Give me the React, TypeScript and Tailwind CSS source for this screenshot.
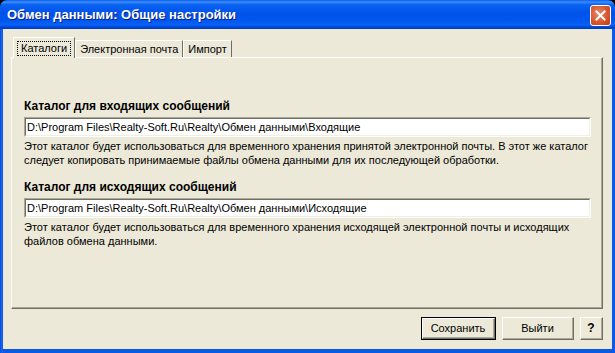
import React from 'react';

const font = { fontFamily: '"Liberation Sans", Arial, sans-serif' };

const Tab: React.FC<{ label: string; active?: boolean }> = ({ label, active }) => {
  if (active) {
    return (
      <div className="relative z-10 -mb-px flex h-[21px] items-center border-l border-t border-white border-r border-r-[#716f64] bg-[#ece9d8] px-[3px]">
        <span className="border border-dotted border-black px-[3px] leading-[13px]">{label}</span>
      </div>
    );
  }
  return (
    <div className="mt-[3px] flex h-[17px] items-center border-l border-t border-white border-r border-r-[#716f64] bg-[#ece9d8] px-[4px]">
      <span className="leading-[13px]">{label}</span>
    </div>
  );
};

const PathInput: React.FC<{ value: string }> = ({ value }) => (
  <div className="h-[20px] border border-t-[#aca899] border-l-[#aca899] border-b-white border-r-white">
    <div className="flex h-full items-center border border-t-[#716f64] border-l-[#716f64] border-b-[#f1efe2] border-r-[#f1efe2] bg-white px-[1px] leading-none whitespace-nowrap">
      {value}
    </div>
  </div>
);

const Button: React.FC<{ label: string; width: string; isDefault?: boolean; bold?: boolean }> = ({ label, width, isDefault, bold }) => (
  <div className={`${width} h-[23px] ${isDefault ? 'border border-black' : ''}`}>
    <div className="h-full border border-t-white border-l-white border-b-[#716f64] border-r-[#716f64]">
      <div className={`flex h-full items-center justify-center border-b border-r border-b-[#aca899] border-r-[#aca899] bg-[#ece9d8] ${bold ? 'font-bold text-[12px]' : ''}`}>
        {label}
      </div>
    </div>
  </div>
);

export default function App() {
  return (
    <div className="h-[353px] w-[615px] bg-black text-[11px] text-black" style={font}>
      <div className="flex h-full w-full flex-col overflow-hidden rounded-t-[7px]">
        {/* Title bar */}
        <div className="flex h-[29px] shrink-0 items-center justify-between bg-[linear-gradient(180deg,#0a5ef5_0%,#3d8df8_7%,#0a62f2_16%,#0053ea_45%,#0056ee_70%,#0a62f6_86%,#0047d8_93%,#003bc0_100%)] pl-[7px] pr-[4px]">
          <span className="text-[13px] font-bold text-white [text-shadow:1px_1px_0_#0a1e80]">
            Обмен данными: Общие настройки
          </span>
          <div className="mt-[1px] flex h-[21px] w-[21px] items-center justify-center rounded-[3px] border border-white bg-[radial-gradient(circle_at_40%_40%,#e98a6c_0%,#d9572f_55%,#c03a16_100%)]">
            <svg width="11" height="11" viewBox="0 0 11 11">
              <path d="M1.5 1.5 L9.5 9.5 M9.5 1.5 L1.5 9.5" stroke="white" strokeWidth="2" strokeLinecap="square" />
            </svg>
          </div>
        </div>

        {/* Window frame */}
        <div className="flex flex-1 flex-col bg-[linear-gradient(90deg,#0831d9_0px,#166aee_1px,#0a5ae6_3px)] px-[3px] pb-[4px]">
          <div className="flex flex-1 flex-col bg-[#ece9d8] pl-[8px] pr-[9px] pt-[8px] pb-[9px]">
            {/* Tabs */}
            <div className="flex items-end pl-[2px]">
              <Tab label="Каталоги" active />
              <Tab label="Электронная почта" />
              <Tab label="Импорт" />
            </div>

            {/* Panel */}
            <div className="h-[252px] border border-t-white border-l-white border-b-[#716f64] border-r-[#716f64]">
              <div className="h-full border-b border-r border-b-[#aca899] border-r-[#aca899] pl-[12px] pr-[10px] pt-[41px]">
                <div className="h-[14px] text-[12px] font-bold leading-[14px]">Каталог для входящих сообщений</div>
                <div className="mt-[4px]">
                  <PathInput value="D:\Program Files\Realty-Soft.Ru\Realty\Обмен данными\Входящие" />
                </div>
                <div className="mt-[2px] leading-[14px] whitespace-nowrap">
                  <div>Этот каталог будет использоваться для временного хранения принятой электронной почты. В этот же каталог</div>
                  <div>следует копировать принимаемые файлы обмена данными для их последующей обработки.</div>
                </div>

                <div className="mt-[13px] h-[14px] text-[12px] font-bold leading-[14px]">Каталог для исходящих сообщений</div>
                <div className="mt-[4px]">
                  <PathInput value="D:\Program Files\Realty-Soft.Ru\Realty\Обмен данными\Исходящие" />
                </div>
                <div className="mt-[2px] leading-[14px] whitespace-nowrap">
                  <div>Этот каталог будет использоваться для временного хранения исходящей электронной почты и исходящих</div>
                  <div>файлов обмена данными.</div>
                </div>
              </div>
            </div>

            {/* Buttons */}
            <div className="mt-[8px] flex justify-end gap-[6px]">
              <Button label="Сохранить" width="w-[75px]" isDefault />
              <Button label="Выйти" width="w-[72px]" />
              <Button label="?" width="w-[23px]" bold />
            </div>
          </div>
        </div>
      </div>
    </div>
  );
}
